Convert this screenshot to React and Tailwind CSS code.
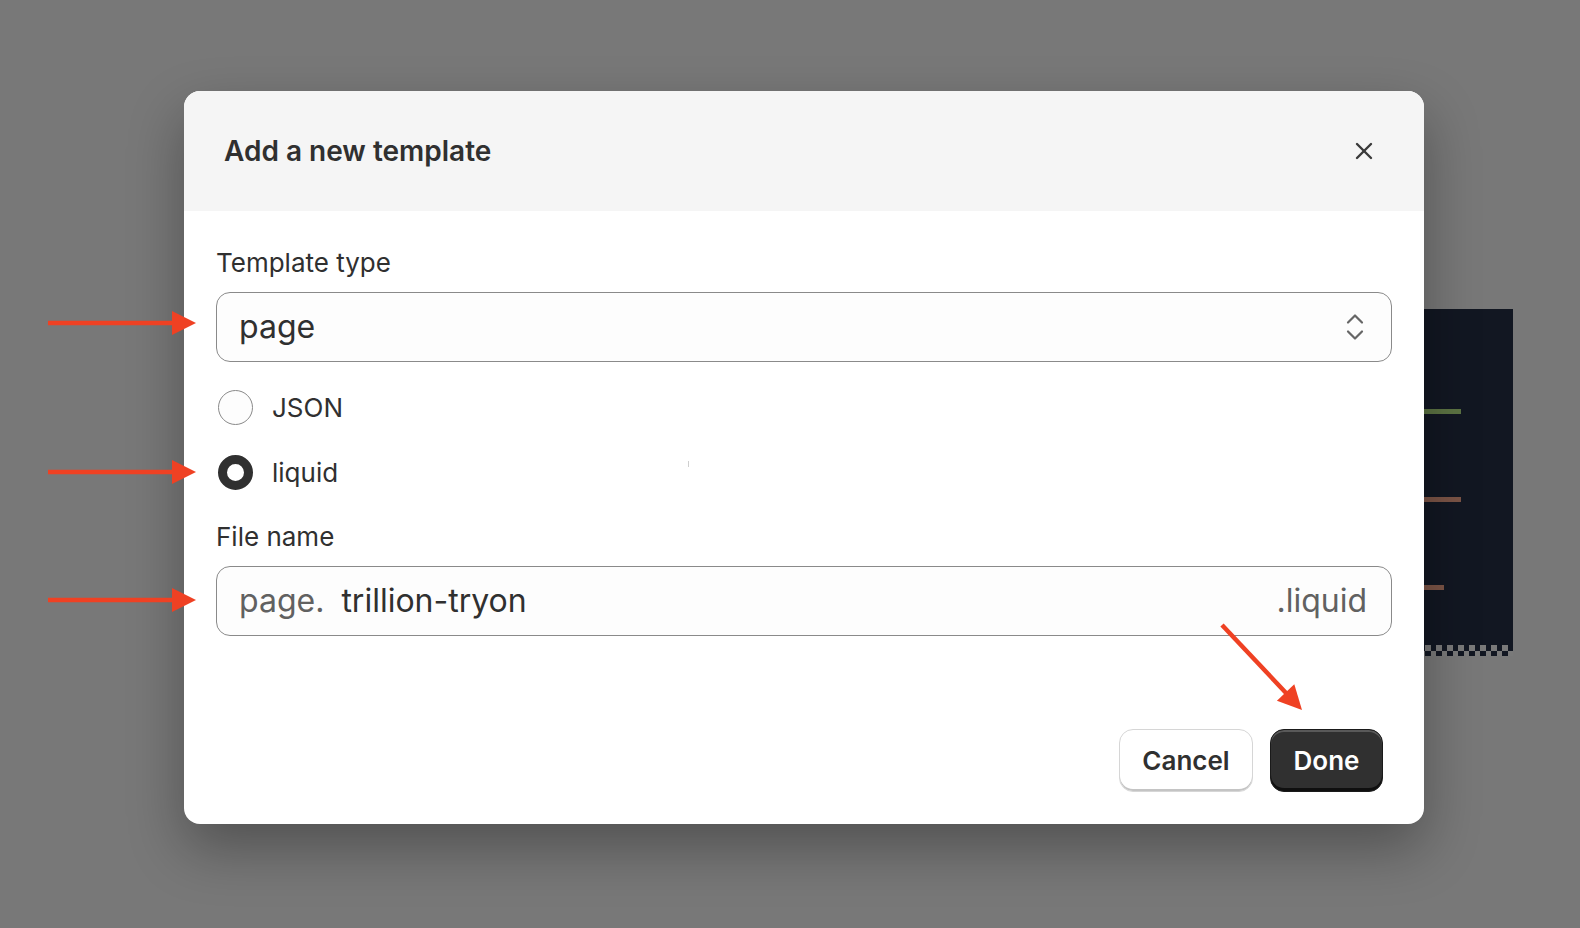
import React from "react";

function SelectIcon() {
  return (
    <svg width="20" height="30" viewBox="0 0 20 30" fill="none" stroke="#666666" strokeWidth="2.2" strokeLinecap="round" strokeLinejoin="round">
      <path d="M3 10.5 L10 3.5 L17 10.5" />
      <path d="M3 19.5 L10 26.5 L17 19.5" />
    </svg>
  );
}

function CloseIcon() {
  return (
    <svg width="18" height="18" viewBox="0 0 18 18" fill="none" stroke="#3a3a3a" strokeWidth="2.4" strokeLinecap="round">
      <path d="M2 2 L16 16" />
      <path d="M16 2 L2 16" />
    </svg>
  );
}

function Arrows() {
  const c = "#ef4123";
  return (
    <svg className="absolute left-0 top-0 pointer-events-none" width="1580" height="928" viewBox="0 0 1580 928">
      <line x1="48" y1="323" x2="176" y2="323" stroke={c} strokeWidth="4.5" />
      <polygon points="172,311 196,323 172,335" fill={c} />
      <line x1="48" y1="472" x2="176" y2="472" stroke={c} strokeWidth="4.5" />
      <polygon points="172,460 196,472 172,484" fill={c} />
      <line x1="48" y1="600" x2="176" y2="600" stroke={c} strokeWidth="4.5" />
      <polygon points="172,588 196,600 172,612" fill={c} />
      <line x1="1222" y1="625" x2="1287" y2="694" stroke={c} strokeWidth="4.5" />
      <polygon points="1302,710 1276.9,700.7 1294.3,684.3" fill={c} />
    </svg>
  );
}

function Checker() {
  const cells = [];
  for (let i = 0; i < 17; i++) {
    cells.push(
      <div key={i} className="flex flex-col w-[5.5px] shrink-0">
        <div className={i % 2 === 0 ? "h-[5.5px] bg-[#121722]" : "h-[5.5px] bg-[#7a7a7a]"} />
        <div className={i % 2 === 0 ? "h-[5.5px] bg-[#7a7a7a]" : "h-[5.5px] bg-[#121722]"} />
      </div>
    );
  }
  return <div className="flex overflow-hidden justify-end">{cells}</div>;
}

function Radio({ checked, label }) {
  return (
    <div className="flex items-center h-[45px]">
      {checked ? (
        <div className="ml-[2px] w-[35px] h-[35px] rounded-full border-[9px] border-[#303030] bg-white" />
      ) : (
        <div className="ml-[2px] w-[35px] h-[35px] rounded-full border border-[#8a8a8a] bg-[#fdfdfd]" />
      )}
      <span className="ml-[19px] text-[26px] leading-[32px] text-[#303030]">{label}</span>
    </div>
  );
}

export default function App() {
  return (
    <div
      className="relative w-[1580px] h-[928px] overflow-hidden bg-[#787878]"
      style={{ fontFamily: "Inter, 'Noto Sans', sans-serif" }}
    >
      {/* background panel */}
      <div className="absolute left-[1300px] top-[309px] w-[213px] h-[347px] bg-[#121722] flex flex-col">
        <div className="flex-1 flex flex-col">
          <div className="mt-[100px] h-[5px] w-[161px] bg-[#5c7343]" />
          <div className="mt-[83px] h-[5px] w-[161px] bg-[#7b5446]" />
          <div className="mt-[83px] h-[5px] w-[144px] bg-[#7b5446]" />
        </div>
        <Checker />
      </div>

      {/* dialog */}
      <div className="absolute left-[184px] top-[91px] w-[1240px] h-[733px] bg-white rounded-[16px] overflow-hidden shadow-[0_24px_56px_rgba(0,0,0,0.32)] flex flex-col">
        <div className="h-[120px] bg-[#f5f5f5] flex items-center justify-between pl-[40px] pr-[40px]">
          <h2 className="text-[28px] leading-[34px] font-semibold text-[#303030]">Add a new template</h2>
          <div className="w-[40px] h-[40px] flex items-center justify-center">
            <CloseIcon />
          </div>
        </div>
        <div className="flex flex-col px-[32px]">
          <div className="mt-[36px] h-[32px] text-[26px] leading-[32px] text-[#303030]">Template type</div>
          <div className="mt-[13px] h-[70px] rounded-[14px] border border-[#8a8a8a] bg-[#fdfdfd] flex items-center justify-between pl-[22px] pr-[26px]">
            <span className="text-[32px] leading-[40px] text-[#303030]">page</span>
            <SelectIcon />
          </div>
          <div className="mt-[23px]">
            <Radio checked={false} label="JSON" />
          </div>
          <div className="mt-[20px] relative">
            <Radio checked={true} label="liquid" />
            <div className="absolute left-[472px] top-[11px] w-px h-[6px] bg-[#cfcfcf]" />
          </div>
          <div className="mt-[26px] h-[32px] text-[26px] leading-[32px] text-[#303030]">File name</div>
          <div className="mt-[13px] h-[70px] rounded-[14px] border border-[#8a8a8a] bg-[#fdfdfd] flex items-center justify-between pl-[22px] pr-[24px]">
            <div className="text-[32px] leading-[40px]">
              <span className="text-[#616161]">page.</span>
              <span className="ml-[17px] text-[#303030]">trillion-tryon</span>
            </div>
            <span className="text-[32px] leading-[40px] text-[#616161]">.liquid</span>
          </div>
          <div className="mt-[93px] flex justify-end gap-[17px] mr-[9px]">
            <button className="w-[134px] h-[63px] rounded-[14px] bg-white border border-[#d6d6d6] shadow-[inset_0_-2px_0_#c4c4c4] text-[26px] font-semibold text-[#303030]">
              Cancel
            </button>
            <button className="w-[113px] h-[63px] rounded-[14px] bg-[#303030] border border-[#1a1a1a] shadow-[inset_0_2px_0_rgba(255,255,255,0.2),inset_0_-3px_0_#0f0f0f] text-[26px] font-semibold text-white">
              Done
            </button>
          </div>
        </div>
      </div>

      <Arrows />
    </div>
  );
}
